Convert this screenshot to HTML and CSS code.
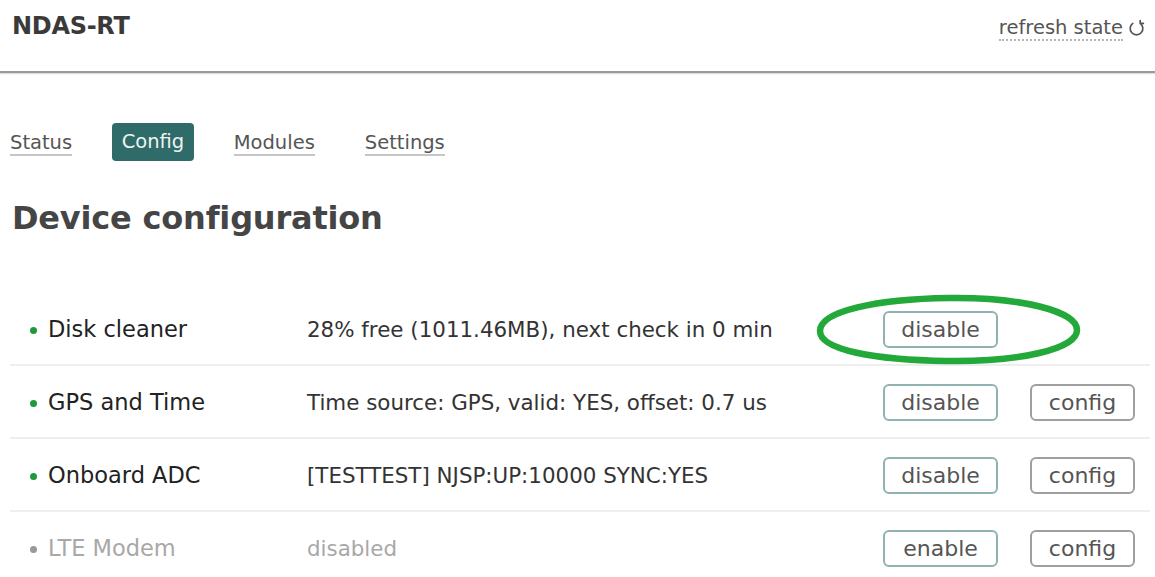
FILE: index.html
```html
<!DOCTYPE html>
<html lang="en">
<head>
<meta charset="utf-8">
<title>NDAS-RT</title>
<link rel="stylesheet" href="styles.css">
</head>
<body>
<header class="topbar">
  <div class="brand">NDAS-RT</div>
  <a class="refresh" href="#"><span class="refresh-label">refresh state</span>
    <svg class="refresh-icon" width="17" height="19" viewBox="0 0 16 18" aria-hidden="true">
      <path d="M4.5 4.2 A6 6 0 1 0 11.5 4.2 L11.5 1.5 M11.5 4.2 L14.5 4.2" fill="none" stroke="#555" stroke-width="1.6" stroke-linecap="round"/>
    </svg>
  </a>
</header>

<nav class="tabs">
  <a class="tab" href="#">Status</a>
  <a class="tab active" href="#">Config</a>
  <a class="tab" href="#">Modules</a>
  <a class="tab wide" href="#">Settings</a>
</nav>

<h1 class="title">Device configuration</h1>

<section class="modules">
  <div class="row">
    <div class="name"><span class="dot on"></span>Disk cleaner</div>
    <div class="desc">28% free (1011.46MB), next check in 0 min</div>
    <div class="actions">
      <button class="btn toggle">disable</button>
      <svg class="mark" width="268" height="72" viewBox="0 0 268 72" aria-hidden="true">
        <path d="M134 4 C 205 3, 262 17, 262 36 C 262 55, 205 68, 132 67 C 60 66, 5 56, 5 37 C 5 17, 62 5, 134 4 Z" fill="none" stroke="#23a83a" stroke-width="6.5"/>
      </svg>
    </div>
  </div>
  <div class="row">
    <div class="name"><span class="dot on"></span>GPS and Time</div>
    <div class="desc">Time source: GPS, valid: YES, offset: 0.7 us</div>
    <div class="actions">
      <button class="btn toggle">disable</button>
      <button class="btn cfg">config</button>
    </div>
  </div>
  <div class="row">
    <div class="name"><span class="dot on"></span>Onboard ADC</div>
    <div class="desc">[TESTTEST] NJSP:UP:10000 SYNC:YES</div>
    <div class="actions">
      <button class="btn toggle">disable</button>
      <button class="btn cfg">config</button>
    </div>
  </div>
  <div class="row off">
    <div class="name"><span class="dot"></span>LTE Modem</div>
    <div class="desc">disabled</div>
    <div class="actions">
      <button class="btn toggle">enable</button>
      <button class="btn cfg">config</button>
    </div>
  </div>
</section>
</body>
</html>
```

FILE: styles.css
```css
* { box-sizing: border-box; }

html, body {
  margin: 0;
  padding: 0;
  background: #fff;
  overflow: hidden;
}

body {
  font-family: "DejaVu Sans", Verdana, sans-serif;
  color: #333;
}

/* top bar */
.topbar {
  height: 73px;
  display: flex;
  justify-content: space-between;
  align-items: flex-start;
  padding: 12px 10px 0 12px;
  border-bottom: 2px solid #9a9a9a;
  box-shadow: 0 1px 1px #ddd;
}

.brand {
  font-size: 24px;
  font-weight: bold;
  color: #3a3a3a;
  letter-spacing: -0.3px;
}

.refresh {
  display: flex;
  align-items: center;
  gap: 5px;
  margin-top: 4px;
  color: #555;
  text-decoration: none;
  font-size: 19.5px;
}

.refresh-label {
  border-bottom: 2px dotted #b5b5b5;
  padding-bottom: 0;
}

/* tabs */
.tabs {
  display: flex;
  align-items: center;
  gap: 40px;
  margin: 49px 0 0 10px;
  height: 39px;
}

.tab {
  font-size: 19.5px;
  color: #555;
  text-decoration: none;
  border-bottom: 2px solid #c6c6c6;
  line-height: 22px;
  margin-top: 4px;
}

.tab.wide { margin-left: 10px; }

.tab.active {
  background: #2f6b69;
  color: #eef4f2;
  border: none;
  border-radius: 4px;
  padding: 8px 9.5px;
  margin-top: 0;
}

/* heading */
.title {
  margin: 37px 0 0 12px;
  font-size: 32px;
  font-weight: bold;
  color: #454545;
  letter-spacing: -0.2px;
  line-height: 40px;
}

/* module list */
.modules {
  margin: 55px 5px 0 10px;
}

.row {
  display: grid;
  grid-template-columns: 297px 576px 1fr;
  align-items: center;
  height: 73px;
  padding-top: 1px;
  border-bottom: 2px solid #eeeeee;
  font-size: 21.4px;
}

.name {
  display: flex;
  align-items: center;
  padding-left: 20px;
  color: #222;
  font-size: 22.5px;
}

.dot {
  width: 7px;
  height: 7px;
  border-radius: 50%;
  background: #999;
  margin-right: 11px;
  margin-top: 2px;
}

.dot.on { background: #1e9a3a; }

.desc { color: #333; }

.row.off .name,
.row.off .desc { color: #a8a8a8; }

.actions {
  position: relative;
  display: flex;
  align-items: center;
  gap: 32px;
}

.btn {
  font-family: inherit;
  font-size: 22px;
  color: #555;
  background: #fff;
  height: 37px;
  border-radius: 6px;
  padding: 0;
  cursor: pointer;
}

.btn.toggle {
  width: 115px;
  border: 2px solid #8fb3b1;
}

.btn.cfg {
  width: 105px;
  border: 2px solid #9f9f9f;
}

/* hand-drawn highlight around the first toggle */
.mark {
  position: absolute;
  left: -68px;
  top: -17px;
  pointer-events: none;
}
```
